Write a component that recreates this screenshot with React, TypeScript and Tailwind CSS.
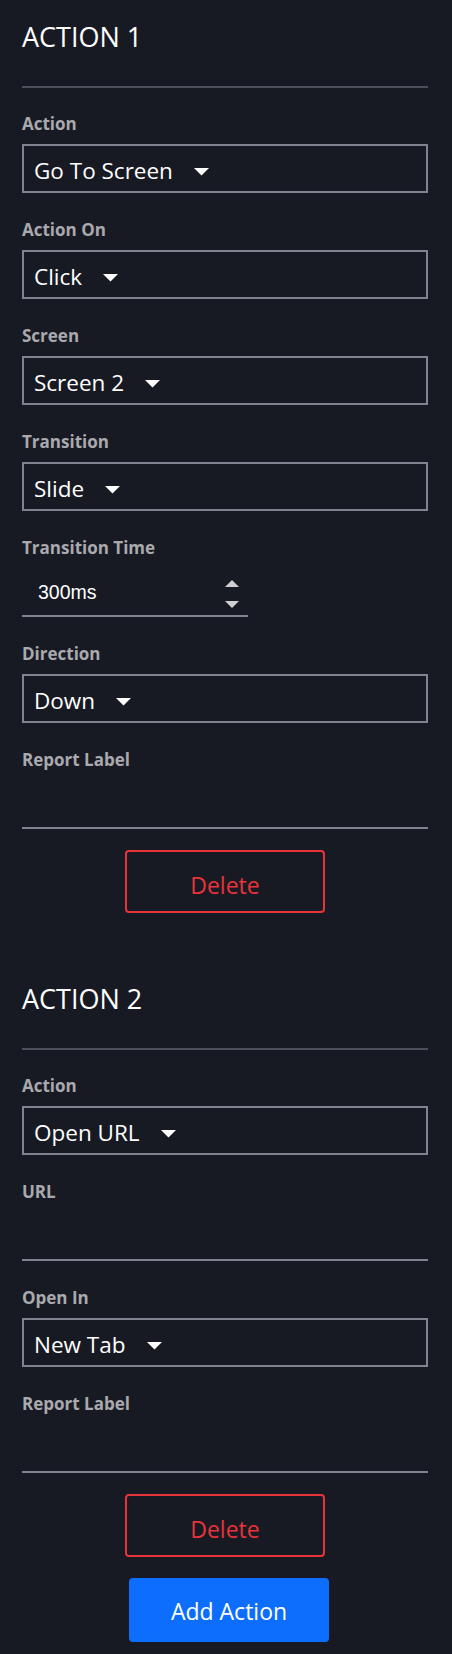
import React from "react";

// ドロップダウンの三角
function Caret() {
  return (
    <svg width="15" height="8" viewBox="0 0 15 8" className="ml-[21px] mt-[2px] shrink-0">
      <path d="M0 0 H15 L7.5 7.5 Z" fill="#ffffff" />
    </svg>
  );
}

function Label({ children }: { children: React.ReactNode }) {
  return (
    <div className="h-[22px] text-[17px] leading-[22px] font-bold text-[#a9a9ae]">{children}</div>
  );
}

function SelectField({ label, value }: { label: string; value: string }) {
  return (
    <div className="flex flex-col">
      <Label>{label}</Label>
      <div className="mt-[9px] flex h-[49px] items-center border-2 border-[#80838f] pl-[10px] pt-[5px] text-[22.5px] text-white">
        <span className="leading-[30px]">{value}</span>
        <Caret />
      </div>
    </div>
  );
}

function TextField({ label }: { label: string }) {
  return (
    <div className="flex flex-col">
      <Label>{label}</Label>
      <div className="mt-[9px] h-[49px] border-b-2 border-[#80838f]" />
    </div>
  );
}

function NumberField({ label, value }: { label: string; value: string }) {
  return (
    <div className="flex flex-col">
      <Label>{label}</Label>
      <div className="mt-[9px] flex h-[49px] w-[226px] items-center justify-between border-b-2 border-[#80838f] pl-[16px] pr-[9px] pt-[3px]">
        <span className="font-['Liberation_Sans',Arial,sans-serif] text-[19.5px] text-white">{value}</span>
        <div className="flex flex-col gap-[14px] pt-[1px]">
          <svg width="14" height="7" viewBox="0 0 14 7">
            <path d="M0 7 L7 0 L14 7 Z" fill="#cfcfd2" />
          </svg>
          <svg width="14" height="7" viewBox="0 0 14 7">
            <path d="M0 0 H14 L7 7 Z" fill="#cfcfd2" />
          </svg>
        </div>
      </div>
    </div>
  );
}

function Section({ title, children }: { title: string; children: React.ReactNode }) {
  return (
    <div className="flex flex-col">
      <div className="border-b-2 border-[#4d4f5b] pb-[31px]">
        <h2 className="h-[36px] text-[27px] leading-[36px] font-normal text-white">{title}</h2>
      </div>
      <div className="mt-[25px] flex flex-col gap-[26px]">{children}</div>
      <div className="mt-[21px] flex justify-center">
        <button className="flex h-[63px] w-[200px] items-center justify-center rounded-[4px] border-2 border-[#e83339] pt-[7px] text-[23px] text-[#e83339]">
          Delete
        </button>
      </div>
    </div>
  );
}

export default function App() {
  return (
    <div className="min-h-screen bg-[#181a23] pl-[22px] pr-[24px] pt-[19px] pb-[12px] font-['Open_Sans','Noto_Sans',sans-serif]">
      <Section title="ACTION 1">
        <SelectField label="Action" value="Go To Screen" />
        <SelectField label="Action On" value="Click" />
        <SelectField label="Screen" value="Screen 2" />
        <SelectField label="Transition" value="Slide" />
        <NumberField label="Transition Time" value="300ms" />
        <SelectField label="Direction" value="Down" />
        <TextField label="Report Label" />
      </Section>

      <div className="mt-[68px]">
        <Section title="ACTION 2">
          <SelectField label="Action" value="Open URL" />
          <TextField label="URL" />
          <SelectField label="Open In" value="New Tab" />
          <TextField label="Report Label" />
        </Section>
      </div>

      {/* 追加ボタン */}
      <div className="mt-[21px] flex justify-center pl-[8px]">
        <button className="flex h-[64px] w-[200px] items-center justify-center rounded-[4px] bg-[#0d6efd] pt-[2px] text-[23px] text-white">
          Add Action
        </button>
      </div>
    </div>
  );
}
